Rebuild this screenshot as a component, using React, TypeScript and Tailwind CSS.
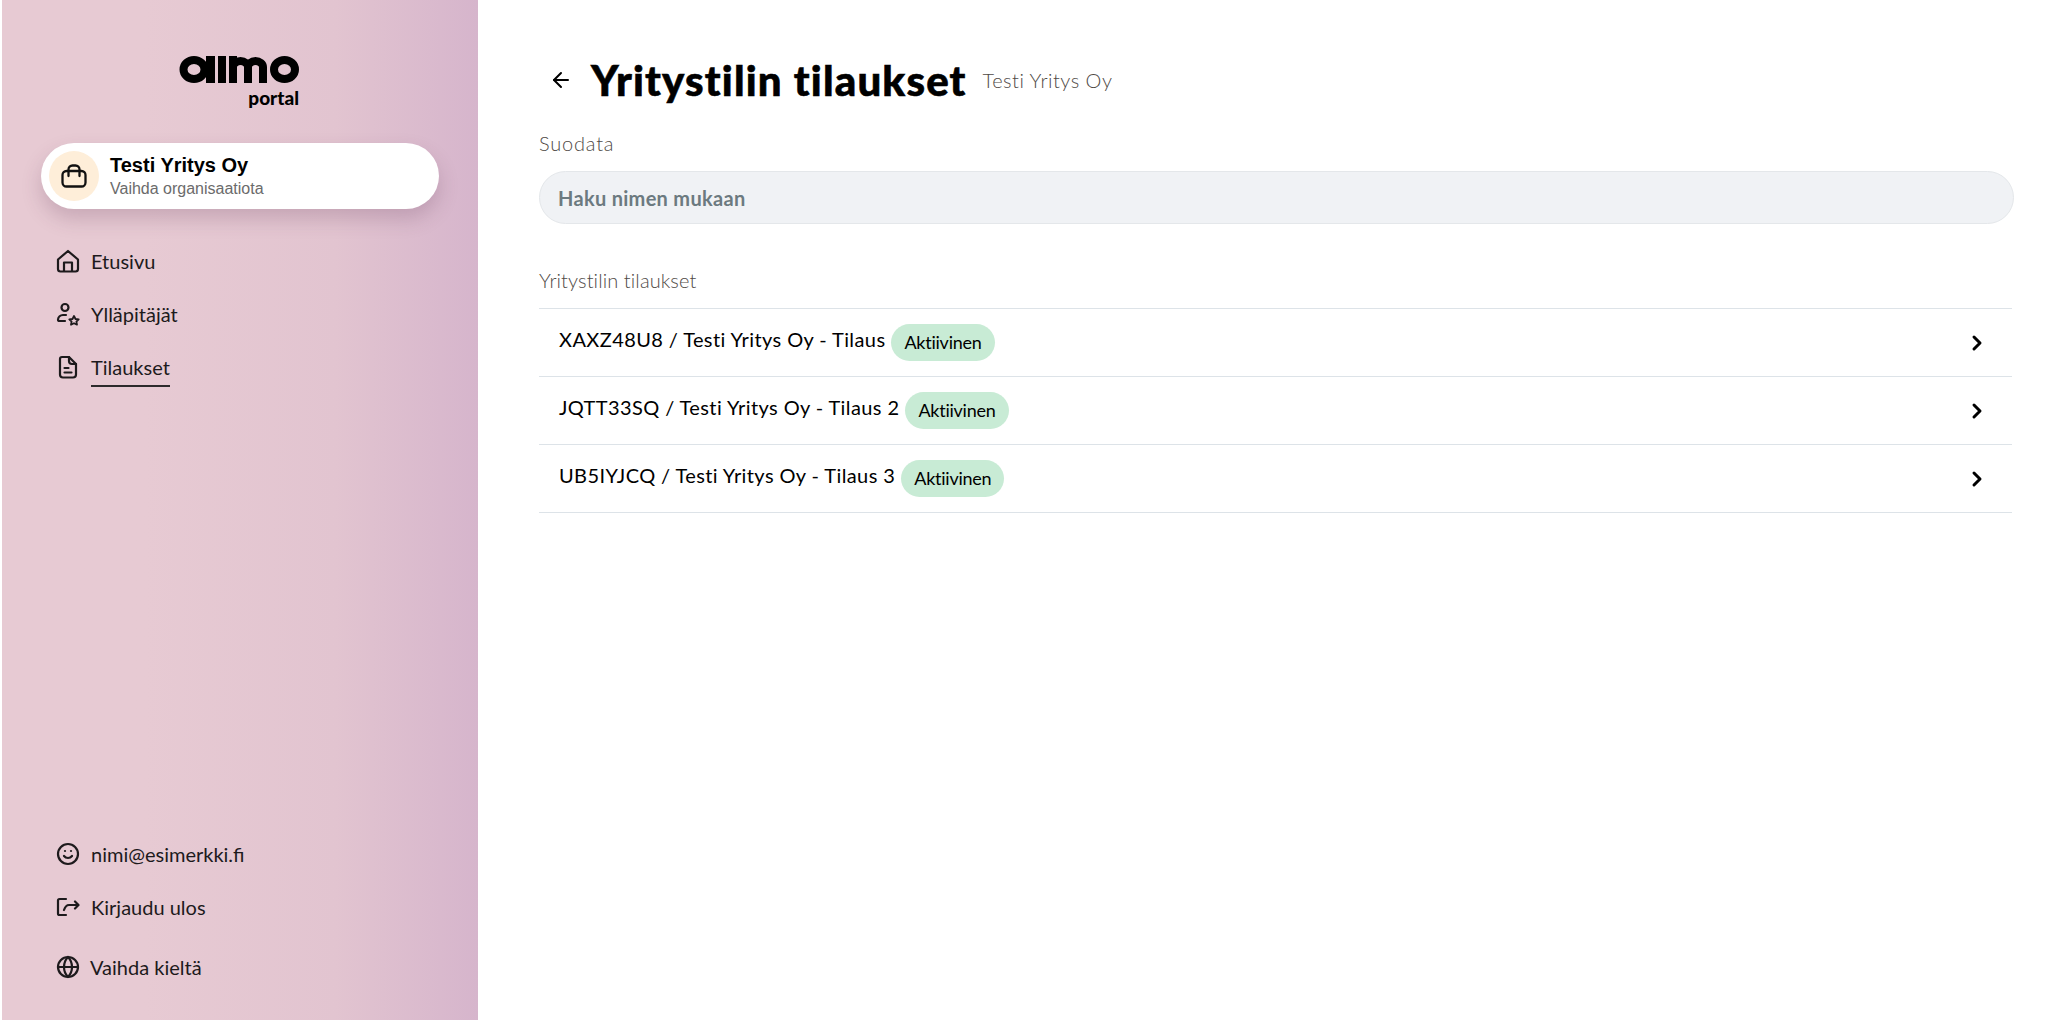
import React from "react";
import { ArrowLeft, ChevronRight, Globe, Smile } from "lucide-react";

const font = "font-['Lato','Noto_Sans',sans-serif]";

const Home = () => (
  <svg width="24" height="24" viewBox="0 0 24 24" fill="none" stroke="currentColor" strokeWidth="2.200" strokeLinejoin="round">
    <path d="M2 10.500 12 2l10 8.500V20a2.500 2.500 0 0 1-2.500 2.500h-15A2.500 2.500 0 0 1 2 20z" />
    <path d="M8 22.500V13.500h8v9" />
  </svg>
);
const UserStar = () => (
  <svg width="24" height="24" viewBox="0 0 24 24" fill="none" stroke="currentColor" strokeWidth="2.200" strokeLinejoin="round" strokeLinecap="round">
    <circle cx="9" cy="5.500" r="3.500" />
    <path d="M10 13H7a5 5 0 0 0-5 4.500c0 1 .8 1.500 1.500 1.500H9" />
    <path d="m18 14 1.500 3 3.200.4-2.300 2.200.6 3.100-3-1.500-3 1.500.6-3.100-2.300-2.200 3.200-.4z" strokeWidth="1.800" />
  </svg>
);
const FileDoc = () => (
  <svg width="24" height="24" viewBox="0 0 24 24" fill="none" stroke="currentColor" strokeWidth="2.200" strokeLinejoin="round" strokeLinecap="round">
    <path d="M6 2h7l7 7v10.500a3 3 0 0 1-3 3H7a3 3 0 0 1-3-3V4a2 2 0 0 1 2-2z" />
    <path d="M13 2v4a3 3 0 0 0 3 3h4M8.500 13h4M8.500 17.500h7" />
  </svg>
);
const LogOut = () => (
  <svg width="24" height="24" viewBox="0 0 24 24" fill="none" stroke="currentColor" strokeWidth="2.200" strokeLinejoin="round" strokeLinecap="round">
    <path d="M10 4H3.500A1.500 1.500 0 0 0 2 5.500v13A1.500 1.500 0 0 0 3.500 20H10" />
    <path d="M8 15c1-3 2.500-5 5-5h9M19 6.500 22.500 10 19 13.500" />
  </svg>
);
const Bag = () => (
  <svg width="26" height="24" viewBox="0 0 26 24" fill="none" stroke="currentColor" strokeWidth="2.300" strokeLinejoin="round" strokeLinecap="round">
    <rect x="1.500" y="7" width="23" height="15.500" rx="4" />
    <path d="M7.500 12V5.500a4 4 0 0 1 4-4h3a4 4 0 0 1 4 4V12" />
  </svg>
);

const Logo = () => (
  <div className="flex flex-col items-end">
    <svg width="120" height="27" viewBox="0 0 120 27" fill="none">
      <ellipse cx="15" cy="13.500" rx="10.500" ry="9.500" stroke="#000" strokeWidth="8" />
      <rect x="27" y="0" width="9" height="27" fill="#000" />
      <rect x="39" y="0" width="8" height="27" fill="#000" />
      <path d="M54 27V11a7.500 6 0 0 1 15 0v16M69 27V11a7.500 6 0 0 1 15 0v16" stroke="#000" strokeWidth="8" />
      <rect x="50" y="0" width="8" height="27" fill="#000" />
      <ellipse cx="105.500" cy="13.500" rx="10.500" ry="9.500" stroke="#000" strokeWidth="8" />
    </svg>
    <span className="mt-[4px] text-[19px] leading-[22px] font-black text-black">portal</span>
  </div>
);

const NavItem = ({ icon, label, active, gap = "gap-[11px]" }: { icon: React.ReactNode; label: string; active?: boolean; gap?: string }) => (
  <div className={`flex items-center ${gap} h-[53px]`}>
    <span className="flex h-6 w-6 flex-none items-center justify-center text-[#1d1a1c]">{icon}</span>
    <span className="relative text-[20px] leading-6 text-[#1d1a1c]">
      {label}
      {active && <span className="absolute left-0 right-0 top-[30px] h-[2px] bg-[#2d2a2c]" />}
    </span>
  </div>
);

const rows = [
  "XAXZ48U8 / Testi Yritys Oy - Tilaus",
  "JQTT33SQ / Testi Yritys Oy - Tilaus 2",
  "UB5IYJCQ / Testi Yritys Oy - Tilaus 3",
];

export default function App() {
  return (
    <div className={`flex h-[1020px] w-[2048px] overflow-hidden bg-white pl-[2px] ${font}`}>
      <aside className="flex w-[476px] flex-none flex-col bg-gradient-to-r from-[#e7cad3] from-30% via-[#e2c4d0] via-70% to-[#d6b5cc] pt-[56px] pb-[27px]">
        <div className="flex justify-end pr-[179px]">
          <Logo />
        </div>
        <div className="mx-[39px] mt-[34px] flex h-[66px] items-center gap-[11px] rounded-full bg-white pl-2 shadow-[0_10px_20px_rgba(90,50,80,0.22)]">
          <div className="flex h-[50px] w-[50px] items-center justify-center rounded-full bg-[#feeed9] text-[#111]">
            <Bag />
          </div>
          <div className="font-['Liberation_Sans',sans-serif]">
            <div className="-mt-[1px] text-[20px] leading-6 font-bold text-black">Testi Yritys Oy</div>
            <div className="mt-[2px] text-[16px] leading-5 text-[#6b6b6b]">Vaihda organisaatiota</div>
          </div>
        </div>
        <nav className="mt-[25px] flex flex-col pl-[54px]">
          <NavItem icon={<Home />} label="Etusivu" />
          <NavItem icon={<UserStar />} label="Ylläpitäjät" />
          <NavItem icon={<FileDoc />} label="Tilaukset" active />
        </nav>
        <div className="mt-auto flex flex-col pl-[54px]">
          <NavItem icon={<Smile size={24} strokeWidth={2.200} />} label="nimi@esimerkki.fi" />
          <NavItem icon={<LogOut />} label="Kirjaudu ulos" />
          <div className="mt-[7px]">
            <NavItem icon={<Globe size={24} strokeWidth={2.200} />} label="Vaihda kieltä" gap="gap-[10px]" />
          </div>
        </div>
      </aside>
      <main className="flex min-w-0 flex-1 flex-col pl-[61px] pr-[34px] pt-[52px]">
        <div className="flex h-[56px] items-center">
          <ArrowLeft size={24} strokeWidth={2} className="ml-[10px] text-black" />
          <h1 className="ml-[18px] text-[42px] leading-[56px] font-black tracking-[1.15px] text-black [-webkit-text-stroke:0.6px_#000]">Yritystilin tilaukset</h1>
          <span className="ml-4 text-[20px] font-light tracking-[0.5px] text-[#4f4a46]">Testi Yritys Oy</span>
        </div>
        <div className="mt-[23px] text-[20px] leading-6 font-light tracking-[0.8px] text-[#4f4a46]">Suodata</div>
        <div className="mt-[16px] flex h-[53px] items-center rounded-full border border-[#e4e7ea] bg-[#f0f2f5] pl-[18px] text-[20px] font-bold tracking-[0.3px] text-[#6c7a80]">
          Haku nimen mukaan
        </div>
        <div className="mt-[44px] pb-[16px] text-[20px] leading-6 font-light tracking-[0.1px] text-[#4f4a46]">Yritystilin tilaukset</div>
        <div className="mr-[2px] border-t border-[#dde3e8]">
          {rows.map((r) => (
            <div key={r} className="flex h-[68px] items-center border-b border-[#dde3e8] pl-[20px] pr-[23px]">
              <span className="-mt-[7px] text-[20px] leading-6 tracking-[0.4px] text-black">{r}</span>
              <span className="ml-[6px] flex h-[37px] items-center rounded-full bg-[#c8ebd5] px-[13px] text-[18px] tracking-[-0.25px] text-black">Aktiivinen</span>
              <ChevronRight size={24} strokeWidth={3} className="ml-auto text-black" />
            </div>
          ))}
        </div>
      </main>
    </div>
  );
}
